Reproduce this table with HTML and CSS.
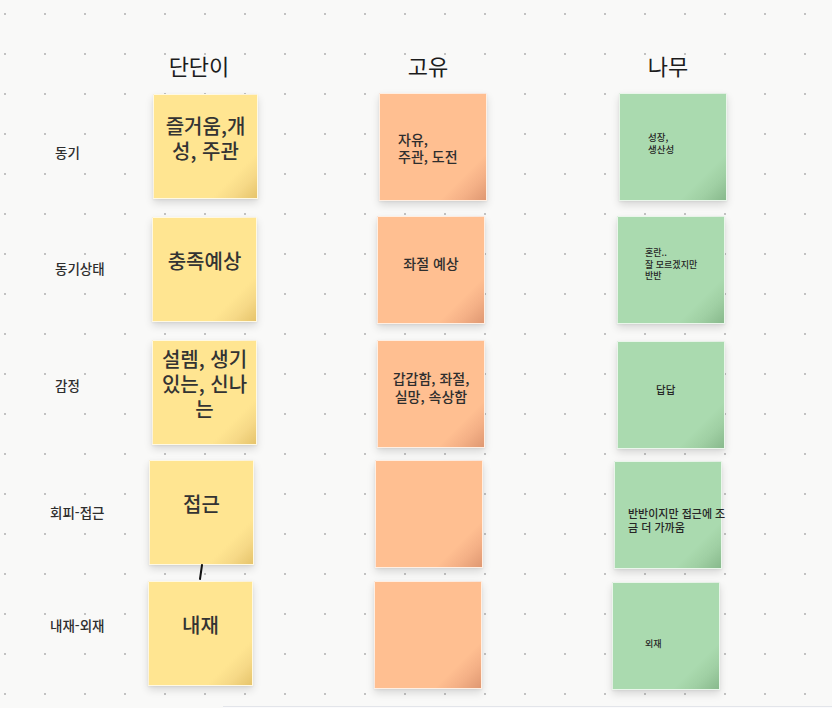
FILE: index.html
```html
<!DOCTYPE html>
<html lang="ko">
<head>
<meta charset="utf-8">
<title>Board</title>
<link rel="stylesheet" href="styles.css">
</head>
<body>
<div class="board">
  <div class="col-title" style="--x:149px;--y:55px">단단이</div>
  <div class="col-title" style="--x:378px;--y:55px">고유</div>
  <div class="col-title" style="--x:618px;--y:55px">나무</div>

  <div class="row-label" style="--x:55px;--y:146px">동기</div>
  <div class="row-label" style="--x:55px;--y:262px">동기상태</div>
  <div class="row-label" style="--x:55px;--y:379px">감정</div>
  <div class="row-label" style="--x:50px;--y:506px">회피-접근</div>
  <div class="row-label" style="--x:50px;--y:619px">내재-외재</div>

  <!-- 단단이 -->
  <div class="note yellow" style="--x:153px;--y:94px"><p class="txt">즐거움,개성, 주관</p></div>
  <div class="note yellow" style="--x:152px;--y:217px"><p class="txt">충족예상</p></div>
  <div class="note yellow" style="--x:152px;--y:340px"><p class="txt">설렘, 생기 있는, 신나는</p></div>
  <div class="note yellow" style="--x:149px;--y:460px"><p class="txt">접근</p></div>
  <div class="note yellow" style="--x:148px;--y:581px"><p class="txt">내재</p></div>

  <!-- 고유 -->
  <div class="note orange top" style="--x:379px;--y:93px"><p class="txt left o1">자유,<br>주관, 도전</p></div>
  <div class="note orange" style="--x:377px;--y:216px"><p class="txt">좌절 예상</p></div>
  <div class="note orange" style="--x:377px;--y:340px"><p class="txt">갑갑함, 좌절,<br>실망, 속상함</p></div>
  <div class="note orange" style="--x:375px;--y:460px"></div>
  <div class="note orange" style="--x:374px;--y:581px"></div>

  <!-- 나무 -->
  <div class="note green top" style="--x:619px;--y:93px"><p class="txt left g1">성장,<br>생산성</p></div>
  <div class="note green top" style="--x:617px;--y:216px"><p class="txt left g2">혼란..<br>잘 모르겠지만<br>반반</p></div>
  <div class="note green top" style="--x:617px;--y:341px"><p class="txt left g3">답답</p></div>
  <div class="note green top" style="--x:614px;--y:461px"><p class="txt left g4">반반이지만 접근에 조금 더 가까움</p></div>
  <div class="note green top" style="--x:612px;--y:582px"><p class="txt left g5">외재</p></div>

  <svg class="connector" width="8" height="18" viewBox="0 0 8 18">
    <line x1="5" y1="1" x2="3" y2="15" stroke="#111" stroke-width="2" stroke-linecap="round"/>
  </svg>

  <div class="dock"></div>
</div>
</body>
</html>
```

FILE: styles.css
```css
* { box-sizing: border-box; }

html, body {
  margin: 0;
  padding: 0;
  background: #f9f9f8;
}

body {
  font-family: "Noto Sans CJK KR", "Noto Sans", sans-serif;
  color: #2b2b2b;
}

.board {
  position: relative;
  width: 832px;
  height: 708px;
  overflow: hidden;
  background-color: #f9f9f8;
  background-image: radial-gradient(circle, #c2c2c2 0.9px, rgba(194,194,194,0) 1.3px);
  background-size: 40px 40px;
  background-position: -15px -6px;
}

.col-title {
  position: absolute;
  left: var(--x);
  top: var(--y);
  width: 100px;
  text-align: center;
  font-size: 22px;
  line-height: 1.45;
  margin-top: -5px;
  font-weight: 400;
  color: #1c1c1c;
}

.row-label {
  position: absolute;
  left: var(--x);
  top: var(--y);
  font-size: 13.5px;
  line-height: 1.45;
  margin-top: -3px;
  font-weight: 500;
  color: #2e2e2e;
  white-space: nowrap;
}

.note {
  position: absolute;
  left: var(--x);
  top: var(--y);
  width: 108px;
  height: 108px;
  display: flex;
  align-items: center;
  justify-content: center;
  border: 1px solid rgba(255,255,255,0.75);
  box-shadow: 0 4px 8px rgba(0,0,0,0.13), 0 1px 2px rgba(0,0,0,0.06);
}

.note.top {
  align-items: flex-start;
  justify-content: flex-start;
}

.yellow {
  width: 105px;
  height: 105px;
  background: linear-gradient(135deg, #ffe591 0%, #ffe591 78%, #f6d987 88%, #e6c46c 100%);
  padding: 0 5px 18px;
}

.orange {
  background: linear-gradient(135deg, #ffbf91 0%, #ffbf91 78%, #f4b086 88%, #df9872 100%);
  padding: 0 4px 14px;
}

.green {
  background: linear-gradient(135deg, #aadaaf 0%, #aadaaf 78%, #9fcfa3 88%, #88b98c 100%);
}

.txt {
  margin: 0;
  text-align: center;
  color: #2e2e2e;
}

.yellow .txt {
  font-size: 20px;
  line-height: 25px;
  font-weight: 500;
  color: #333;
}

.orange .txt {
  font-size: 14px;
  line-height: 18px;
  font-weight: 500;
}

.txt.left { text-align: left; }

.orange .o1 {
  line-height: 17px;
  align-self: flex-start;
  margin: 37px 0 0 14px;
}

.green .txt {
  font-weight: 500;
  color: #262626;
}

.g1 {
  font-size: 9.5px;
  line-height: 12px;
  margin: 37px 0 0 28px;
}

.g2 {
  font-size: 9px;
  line-height: 11.5px;
  margin: 30px 0 0 27px;
}

.g3 {
  font-size: 10.5px;
  line-height: 12px;
  margin: 42px 0 0 38px;
}

.g4 {
  font-size: 11px;
  line-height: 14px;
  width: 104px;
  flex: none;
  margin: 44px 0 0 13px;
}

.g5 {
  font-size: 9px;
  line-height: 11px;
  margin: 55px 0 0 32px;
}

.connector {
  position: absolute;
  left: 197px;
  top: 564px;
}

.dock {
  position: absolute;
  left: 223px;
  right: 0;
  top: 706px;
  height: 4px;
  background: #fbfbfc;
  border-top: 1px solid #e3e5ea;
}
```
